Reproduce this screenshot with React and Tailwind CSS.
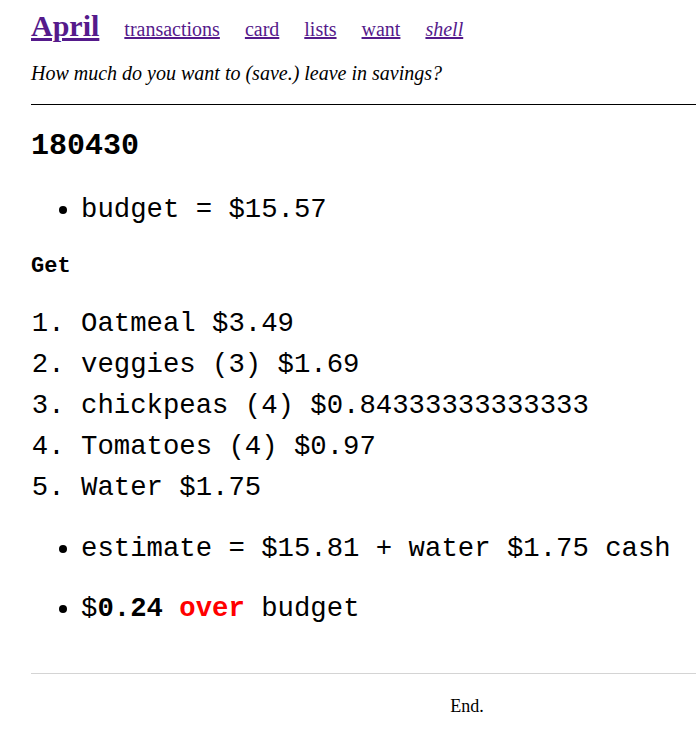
import React from "react";

const links = [
  { label: "transactions" },
  { label: "card" },
  { label: "lists" },
  { label: "want" },
  { label: "shell", italic: true },
];

const items = [
  "Oatmeal $3.49",
  "veggies (3) $1.69",
  "chickpeas (4) $0.84333333333333",
  "Tomatoes (4) $0.97",
  "Water $1.75",
];

const mono = "font-['Liberation_Mono','Courier_New',monospace]";
const serif = "font-['Liberation_Serif','Times_New_Roman',serif]";

const App = () => {
  return (
    <div className="w-[696px] min-h-[739px] overflow-hidden bg-white text-black">
      <div className="ml-[31px] w-[872px]">
        <header className={`${serif} flex items-baseline gap-[25px] pt-[6px] leading-[40px]`}>
          <a href="#" className="text-[30px] font-bold text-[#551a8b] underline">
            April
          </a>
          {links.map((link) => (
            <a
              key={link.label}
              href="#"
              className={`text-[20px] text-[#551a8b] underline ${link.italic ? "italic" : ""}`}
            >
              {link.label}
            </a>
          ))}
        </header>

        <p className={`${serif} mt-[10px] text-[20px] italic leading-[28px]`}>
          How much do you want to (save.) leave in savings?
        </p>

        <hr className="mt-[17px] border-t border-black" />

        <main className={mono}>
          <h2 className="mt-[21px] text-[30px] font-bold leading-[40px]">180430</h2>

          <ul className="mt-[23px] list-disc pl-[50px] text-[27.3px] leading-[41px]">
            <li>budget = $15.57</li>
          </ul>

          <h4 className="mt-[22px] text-[22px] font-bold leading-[30px]">Get</h4>

          <ol className="mt-[21px] list-decimal pl-[50px] text-[27.3px] leading-[41px]">
            {items.map((item) => (
              <li key={item} className="whitespace-nowrap">
                {item}
              </li>
            ))}
          </ol>

          <ul className="mt-[20px] list-disc pl-[50px] text-[27.3px] leading-[41px]">
            <li className="whitespace-nowrap">estimate = $15.81 + water $1.75 cash</li>
          </ul>

          <ul className="mt-[19px] list-disc pl-[50px] text-[27.3px] leading-[41px]">
            <li>
              $<b>0.24</b> <b className="text-[#ff0000]">over</b> budget
            </li>
          </ul>
        </main>

        <hr className="mt-[44px] border-t border-[#d4d4d4]" />

        <footer className={`${serif} mt-[20px] text-center text-[18px] leading-[24px]`}>
          End.
        </footer>
      </div>
    </div>
  );
};

export default App;
